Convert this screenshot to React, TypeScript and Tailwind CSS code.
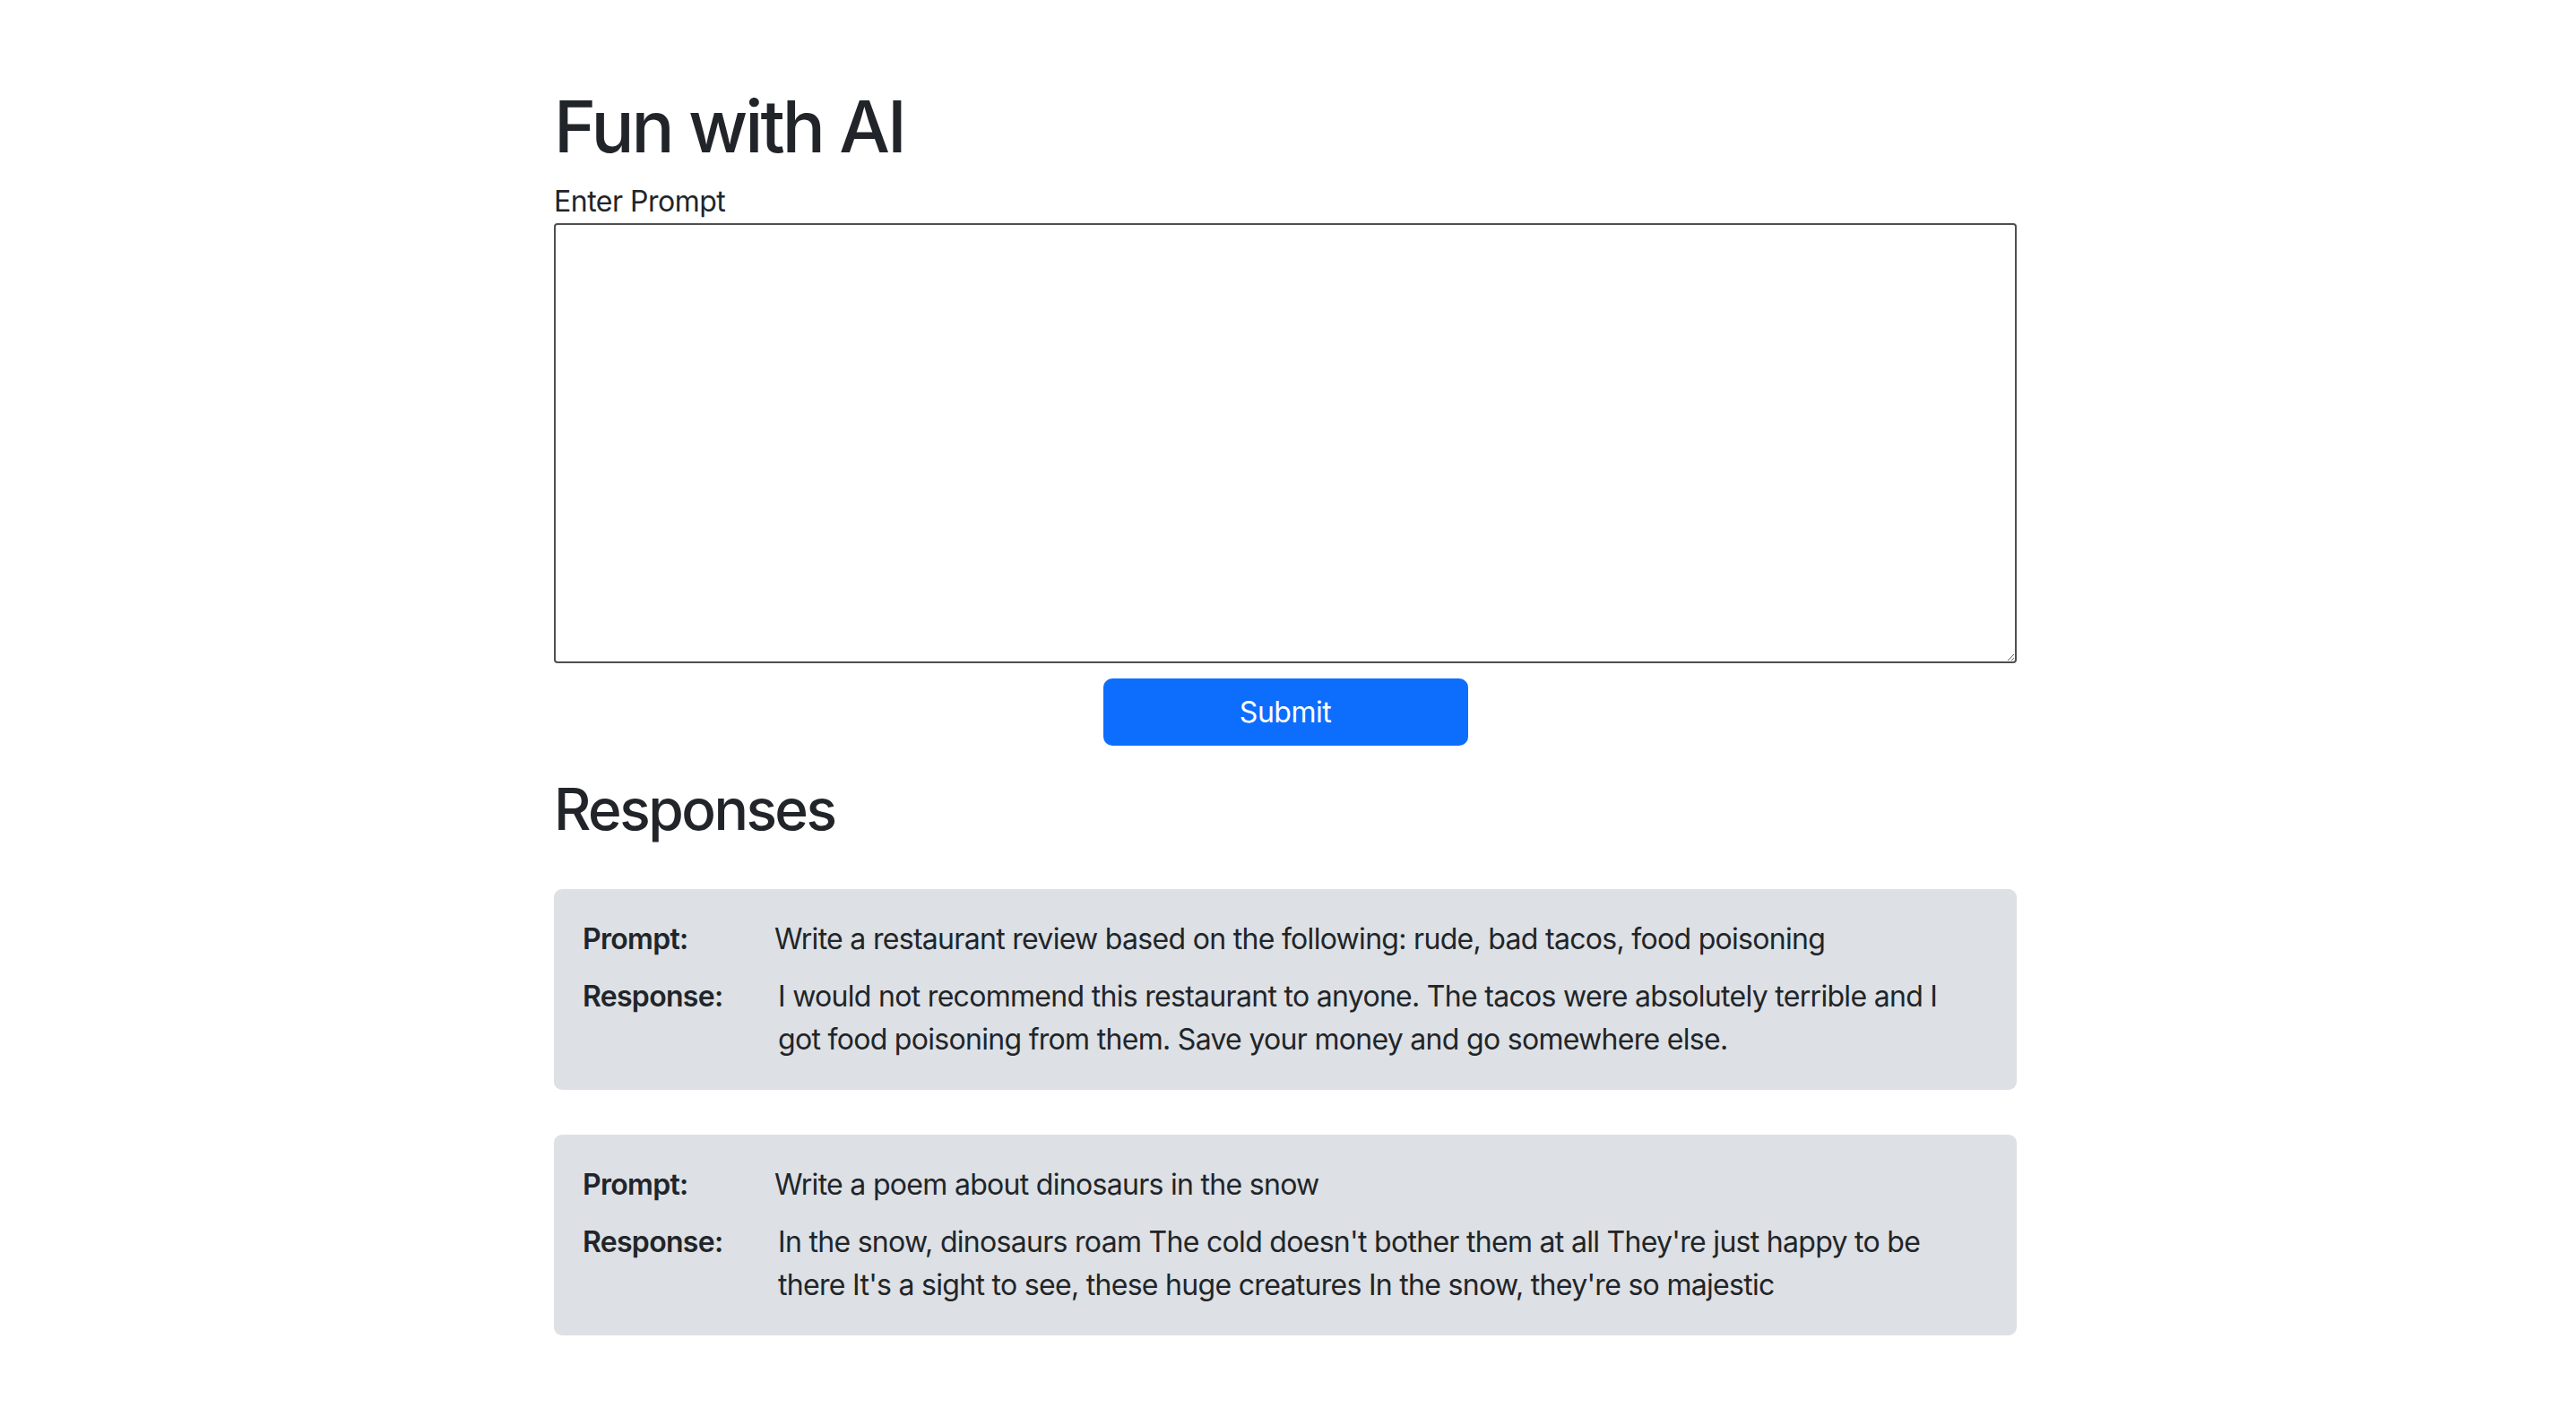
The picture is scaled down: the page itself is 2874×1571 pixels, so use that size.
import { useState } from 'react';

interface ResponseItem {
  prompt: string;
  response: string;
}

const responses: ResponseItem[] = [
  {
    prompt: 'Write a restaurant review based on the following: rude, bad tacos, food poisoning',
    response:
      'I would not recommend this restaurant to anyone. The tacos were absolutely terrible and I got food poisoning from them. Save your money and go somewhere else.'
  },
  {
    prompt: 'Write a poem about dinosaurs in the snow',
    response:
      "In the snow, dinosaurs roam The cold doesn't bother them at all They're just happy to be there It's a sight to see, these huge creatures In the snow, they're so majestic"
  }
];

function ResponseCard({ item }: { item: ResponseItem }) {
  return (
    <div className="bg-[#dde0e4] rounded-[9px] pl-[32px] pr-[58px] py-[32px] tracking-[-0.7px]">
      <div className="flex leading-[48px]">
        <span className="w-[214px] shrink-0 font-semibold">Prompt:</span>
        <span>{item.prompt}</span>
      </div>
      <div className="flex leading-[48px] mt-[16px]">
        <span className="w-[218px] shrink-0 font-semibold">Response:</span>
        <span>{item.response}</span>
      </div>
    </div>
  );
}

export default function App() {
  const [prompt, setPrompt] = useState('');

  return (
    <div
      className="min-h-screen bg-white text-[#212529] text-[32px]"
      style={{ fontFamily: 'Inter, "Noto Sans", "Liberation Sans", sans-serif' }}
    >
      <div className="mx-auto w-[1638px] pr-[6px] pt-[93px] pb-[80px]">
        <h1 className="text-[80px] leading-[96px] font-medium tracking-[-3px] mb-[12px]">Fun with AI</h1>

        <label className="block leading-[48px] tracking-[-0.5px]">Enter Prompt</label>
        <textarea
          value={prompt}
          onChange={(e) => setPrompt(e.target.value)}
          className="block w-full h-[491px] border-2 border-[#4f4f4f] rounded-[4px] outline-none px-3 py-2"
        />

        <div className="flex justify-center mt-[17px]">
          <button className="w-[407px] h-[75px] bg-[#0d6efd] text-white rounded-[10px] text-[32px] leading-[48px] tracking-[-0.5px]">
            Submit
          </button>
        </div>

        <h2 className="text-[64px] leading-[77px] font-medium tracking-[-2.5px] mt-[32px] mb-[51px]">Responses</h2>

        <div className="flex flex-col gap-[50px]">
          {responses.map((item) => (
            <ResponseCard key={item.prompt} item={item} />
          ))}
        </div>
      </div>
    </div>
  );
}
